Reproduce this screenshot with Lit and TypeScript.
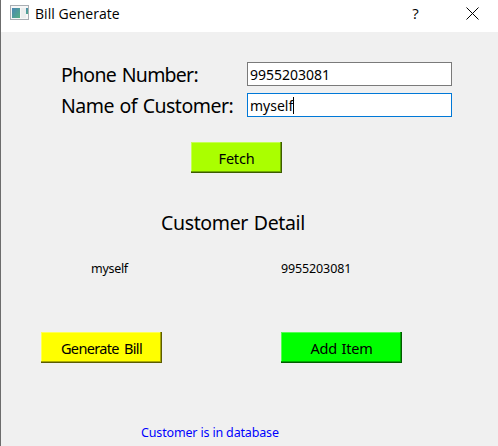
import { LitElement, html, css } from "lit";
import { customElement, property } from "lit/decorators.js";

@customElement("push-button")
class PushButton extends LitElement {
  @property() label = "";
  static styles = css`
    :host { display: block; height: 31px; }
    button {
      display: flex; align-items: center; justify-content: center;
      box-sizing: border-box; width: 100%; height: 31px; margin: 0; padding: 1px 0 0;
      border: 0; background: var(--face); color: #000;
      box-shadow: inset -1px -1px var(--dark), inset -2px -2px var(--mid), inset 1px 1px var(--light);
      font: 14.5px/20px "Noto Sans", sans-serif; letter-spacing: var(--track, 0); word-spacing: var(--gap, 0); white-space: nowrap;
    }
  `;
  render() {
    return html`<button>${this.label}</button>`;
  }
}

@customElement("app-root")
class AppRoot extends LitElement {
  static styles = css`
    :host {
      display: block; box-sizing: border-box; width: 498px; height: 446px; overflow: hidden;
      background: #f0f0f0; border-left: 1px solid #6c6c6c; color: #000;
      font-family: "Noto Sans", sans-serif;
    }
    header { display: flex; height: 32px; background: #fff; }
    .app { width: 20px; height: 16px; margin: 5px 5px 0 9px; }
    .title { flex: 1; font: 14px/20px "Open Sans", sans-serif; padding-top: 4px; letter-spacing: 0.05px; }
    .help { width: 57px; text-align: center; font: 15px/20px "Open Sans", sans-serif; padding-top: 3px; box-sizing: border-box; }
    .close { width: 13px; height: 13px; margin: 7px 19px 0 22px; }
    form { display: grid; grid-template-columns: 186px 205px; grid-template-rows: 24px 24px; row-gap: 7px; padding: 30px 0 0 60px; }
    .label { font-size: 19.5px; line-height: 26px; white-space: nowrap; }
    .phone { letter-spacing: -0.75px; word-spacing: 1.5px; }
    .name { letter-spacing: -0.5px; word-spacing: 1px; }
    .field { display: flex; box-sizing: border-box; height: 24px; border: 1px solid #7a7a7a; background: #fff; padding: 1px 0 0 2px; font-size: 14px; line-height: 21px; }
    .focus { border-color: #0078d7; }
    .caret { width: 1px; height: 17px; margin-top: 2px; background: #000; }
    .fetch { width: 91px; margin: 25px 0 0 190px; --face: #af0; --light: #c6ff55; --mid: #71aa00; --dark: #3d5c00; --track: -0.2px; }
    .heading { font-size: 19.5px; line-height: 26px; margin: 37px 0 0 160px; letter-spacing: -0.35px; word-spacing: 1px; }
    .details { display: grid; grid-template-columns: 190px 1fr; padding: 24px 0 0 90px; font-size: 12.5px; line-height: 18px; }
    .customer { letter-spacing: -0.3px; }
    .number { letter-spacing: -0.13px; }
    .actions { display: flex; gap: 119px; padding: 54px 0 0 40px; }
    .actions push-button { width: 121px; }
    .bill { --face: #ff0; --light: #ffff55; --mid: #aaaa00; --dark: #5c5c00; --track: -0.65px; --gap: 2px; }
    .add { --face: #0f0; --light: #55ff55; --mid: #00aa00; --dark: #005c00; --track: -0.2px; --gap: 1px; }
    .status { color: #00f; font-size: 12.5px; line-height: 18px; margin: 61px 0 0 140px; letter-spacing: -0.16px; }
  `;
  render() {
    return html`
      <header>
        <svg class="app" viewBox="0 0 20 16">
          <defs><linearGradient id="g" x1="0" y1="0" x2="1" y2="1"><stop stop-color="#4a86b4" /><stop offset="1" stop-color="#55b083" /></linearGradient></defs>
          <rect x=".5" y=".5" width="18" height="14" fill="#f7f7f7" stroke="#a9aeb3" />
          <rect x="2" y="3" width="8" height="10" fill="url(#g)" />
          <rect x="11" y="3" width="5" height="10" fill="#eceeee" />
          <rect x="16" y="3" width="2" height="6" fill="url(#g)" />
        </svg>
        <div class="title">Bill Generate</div>
        <div class="help">?</div>
        <svg class="close" viewBox="0 0 13 13"><path d="M.5.5l12 12M12.5.5l-12 12" stroke="#000" stroke-width="1" /></svg>
      </header>
      <form>
        <div class="label phone">Phone Number:</div>
        <div class="field">9955203081</div>
        <div class="label name">Name of Customer:</div>
        <div class="field focus">myself<span class="caret"></span></div>
      </form>
      <push-button class="fetch" label="Fetch"></push-button>
      <div class="heading">Customer Detail</div>
      <div class="details"><span class="customer">myself</span><span class="number">9955203081</span></div>
      <div class="actions">
        <push-button class="bill" label="Generate Bill"></push-button>
        <push-button class="add" label="Add Item"></push-button>
      </div>
      <div class="status">Customer is in database</div>
    `;
  }
}
